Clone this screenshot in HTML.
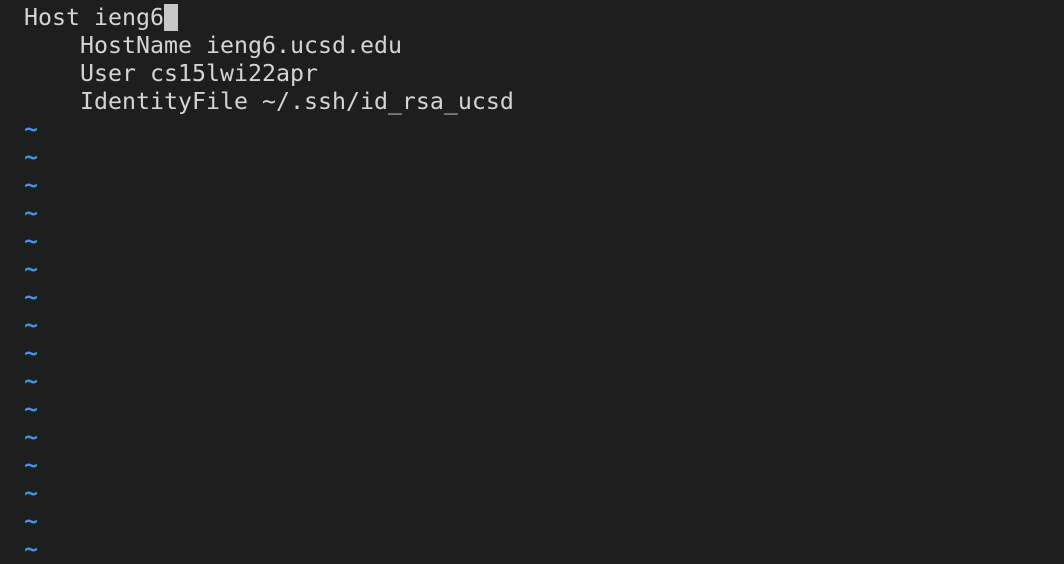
<!DOCTYPE html>
<html><head><style>
html,body{margin:0;padding:0;background:#1e1e1e;width:1064px;height:552px;overflow:hidden}
pre{margin:0;position:absolute;left:24px;top:4px;font-family:"DejaVu Sans Mono","Liberation Mono",monospace;font-size:23.25px;line-height:28px;color:#d4d4d4}
.t{color:#4a8fe6;font-weight:bold}
.c{background:#c8c8c8;color:#1e1e1e}
</style></head><body>
<pre>Host ieng6<span class="c"> </span>
    HostName ieng6.ucsd.edu
    User cs15lwi22apr
    IdentityFile ~/.ssh/id_rsa_ucsd
<span class="t">~
~
~
~
~
~
~
~
~
~
~
~
~
~
~
~</span></pre>
</body></html>
